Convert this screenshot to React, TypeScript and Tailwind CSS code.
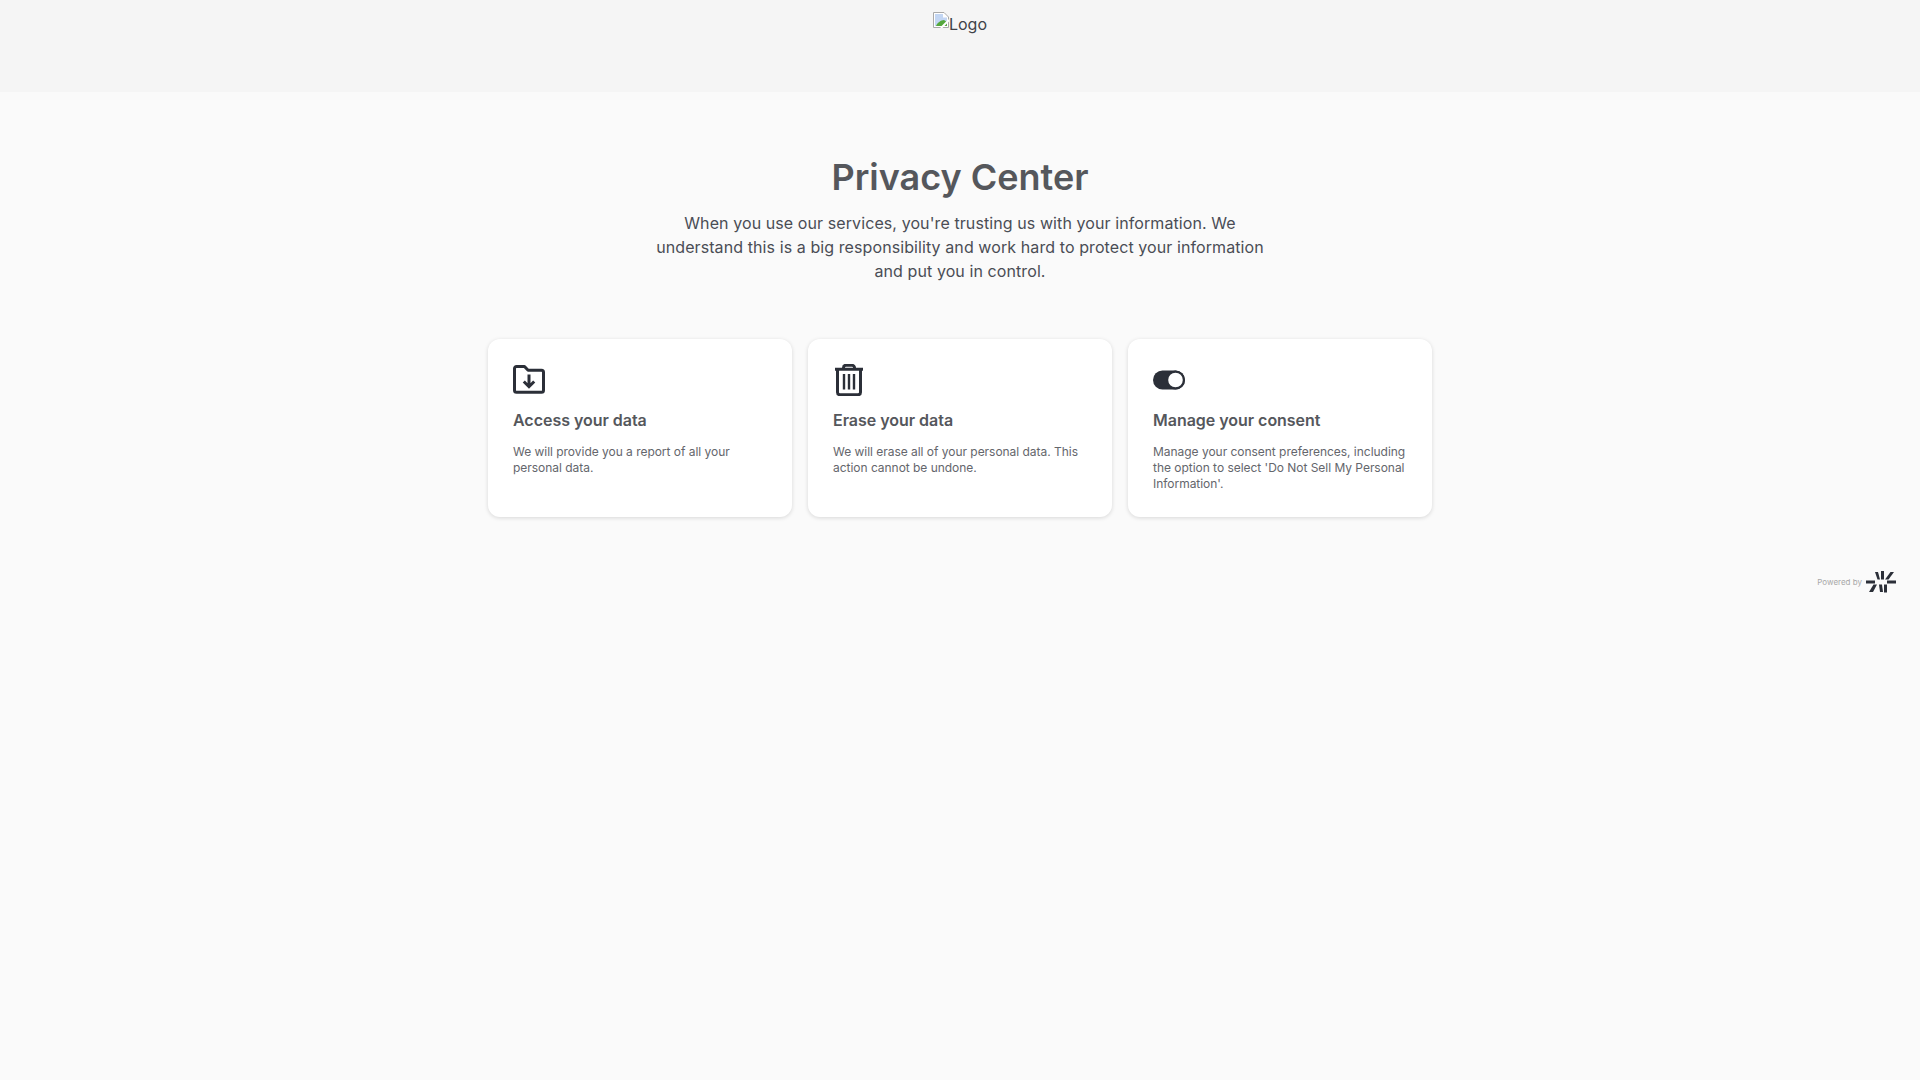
const cards = [
  {
    title: "Access your data",
    desc: "We will provide you a report of all your personal data.",
    icon: (
      <svg width="32" height="32" viewBox="0 0 32 32" fill="none" stroke="#2b2f38" strokeWidth="3">
        <path d="M1.500 4.500a2 2 0 0 1 2-2h8l3.600 3.800h13.400a2 2 0 0 1 2 2v18a2 2 0 0 1-2 2h-25a2 2 0 0 1-2-2z" strokeLinejoin="round" />
        <path d="M16 10.500v12M10.800 17.500l5.200 5.200 5.200-5.200" />
      </svg>
    ),
  },
  {
    title: "Erase your data",
    desc: "We will erase all of your personal data. This action cannot be undone.",
    icon: (
      <svg width="32" height="32" viewBox="0 0 32 32" fill="none" stroke="#2b2f38" strokeWidth="3">
        <path d="M2 5.300h28M4.500 5.500v22.700a2.500 2.500 0 0 0 2.500 2.500h18a2.500 2.500 0 0 0 2.500-2.500V5.500" />
        <path d="M10.500 5V3.800a2.500 2.500 0 0 1 2.500-2.500h6a2.500 2.500 0 0 1 2.500 2.500V5" />
        <path d="M11 10v15.500M16 10v15.500M21 10v15.500" strokeWidth="2.400" />
      </svg>
    ),
  },
  {
    title: "Manage your consent",
    desc: "Manage your consent preferences, including the option to select 'Do Not Sell My Personal Information'.",
    icon: (
      <svg width="32" height="32" viewBox="0 0 32 32" fill="none">
        <rect x="0" y="6.500" width="32" height="19" rx="9.500" fill="#2b2f38" />
        <circle cx="22.500" cy="16" r="8.400" fill="#fff" stroke="#2b2f38" strokeWidth="2.200" />
      </svg>
    ),
  },
];

export default function App() {
  return (
    <div className="min-h-screen bg-[#fafafa] font-['Inter',sans-serif] text-[#4a4d55]">
      <header className="h-[92px] bg-[#f5f5f5] flex justify-center">
        <div className="flex items-start mt-[12px] h-[24px] text-[16px] leading-[24px]">
          <svg width="16" height="16" viewBox="0 0 16 16" className="shrink-0">
            <path d="M.5.5h10.500l4.500 4.500v10.500H.5z" fill="#fff" stroke="#a9a9a9" />
            <path d="M2 2h8v3.500h4V14H2z" fill="#c3d6f3" />
            <path d="M3 14c1-3 5-6 8-6l3 2v4z" fill="#55a83c" />
            <path d="M8 16L16 8" stroke="#fff" strokeWidth="2" />
          </svg>
          <span className="text-[#3f4248]">Logo</span>
        </div>
      </header>
      <main className="flex flex-col items-center pt-[64px]">
        <h1 className="text-[36px] leading-[28px] font-semibold text-[#55575c] h-[28px] mt-[7px]">Privacy Center</h1>
        <p className="w-[632px] mt-[20px] text-center text-[16px] leading-[24px] tracking-[0.09px]">
          When you use our services, you're trusting us with your information. We understand this is a big responsibility and work hard to protect your information and put you in control.
        </p>
        <div className="flex gap-[16px] mt-[56px]">
          {cards.map((c) => (
            <div key={c.title} className="w-[304px] h-[178px] bg-white rounded-[12px] shadow-[0_1px_4px_rgba(0,0,0,0.14)] px-[25px] pt-[25px]">
              {c.icon}
              <h2 className="mt-[12px] text-[16px] leading-[24px] font-semibold text-[#55575c] tracking-[-0.03px]">{c.title}</h2>
              <p className="mt-[12px] text-[12px] leading-[16px] text-[#64666c] tracking-[-0.03px]">{c.desc}</p>
            </div>
          ))}
        </div>
      </main>
      <footer className="flex justify-end items-center gap-[3px] mt-[50px] pr-[23px] h-[30px]">
        <span className="text-[8px] text-[#a8a8a8]">Powered by</span>
        <svg width="32" height="22" viewBox="0 0 32 22" fill="#2b2f38">
          <rect x="1" y="9.500" width="9" height="3" />
          <rect x="22" y="9.500" width="9" height="3" />
          <polygon points="10,1 13,1 15,8.500 12.500,8.500" />
          <rect x="16" y="0" width="3" height="8.500" />
          <polygon points="29,1 25.500,1 20,8.500 23.500,8.500" />
          <polygon points="8.500,13.500 12,13.500 8,21 4,21" />
          <polygon points="14,13.500 17,13.500 18,21 15,21" />
          <rect x="19" y="13.500" width="3" height="8" />
        </svg>
      </footer>
    </div>
  );
}
